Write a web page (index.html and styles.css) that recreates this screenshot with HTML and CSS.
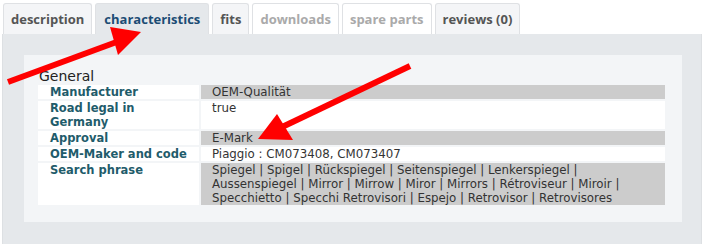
FILE: index.html
```html
<!DOCTYPE html>
<html lang="en">
<head>
  <meta charset="UTF-8" />
  <title>Product characteristics</title>
  <link rel="stylesheet" href="styles.css">
</head>
<body>
  <div class="page">
    <ul class="tabs">
      <li class="tab">description</li>
      <li class="tab active">characteristics</li>
      <li class="tab">fits</li>
      <li class="tab disabled">downloads</li>
      <li class="tab disabled">spare parts</li>
      <li class="tab">reviews (0)</li>
    </ul>

    <div class="panel">
      <div class="box">
        <div class="group-title">General</div>
        <table class="specs">
          <tr class="odd">
            <th>Manufacturer</th>
            <td>OEM-Qualität</td>
          </tr>
          <tr>
            <th>Road legal in<br>Germany</th>
            <td>true</td>
          </tr>
          <tr class="odd">
            <th>Approval</th>
            <td>E-Mark</td>
          </tr>
          <tr>
            <th>OEM-Maker and code</th>
            <td>Piaggio : CM073408, CM073407</td>
          </tr>
          <tr class="odd">
            <th>Search phrase</th>
            <td>Spiegel | Spigel | Rückspiegel | Seitenspiegel | Lenkerspiegel | Aussenspiegel | Mirror | Mirrow | Miror | Mirrors | Rétroviseur | Miroir | Specchietto | Specchi Retrovisori | Espejo | Retrovisor | Retrovisores</td>
          </tr>
        </table>
      </div>
    </div>

    <!-- annotation arrows drawn over the screenshot -->
    <svg class="arrows" width="705" height="244" viewBox="0 0 705 244">
      <line x1="8" y1="82" x2="122" y2="40" stroke="#f00" stroke-width="6" />
      <polygon points="110,27 141,32 118,55" fill="#f00" />
      <line x1="410" y1="66" x2="280" y2="128" stroke="#f00" stroke-width="6" />
      <polygon points="258,139 277,114 293,140" fill="#f00" />
    </svg>
  </div>
</body>
</html>
```

FILE: styles.css
```css
body {
  margin: 0;
  background: #fff;
  font-family: 'DejaVu Sans', Verdana, sans-serif;
}

.page {
  position: relative;
  width: 705px;
  height: 244px;
  padding: 3px 3px 0 2px;
  box-sizing: border-box;
  overflow: hidden;
}

.tabs {
  display: flex;
  gap: 3px;
  list-style: none;
  margin: 0 0 0 1px;
  padding: 0;
}

.tab {
  font-family: 'Open Sans', sans-serif;
  font-weight: bold;
  font-size: 13px;
  line-height: 18px;
  padding: 6px 7px;
  color: #555;
  background: #f4f5f7;
  border: 1px solid #dfe1e4;
  border-bottom: none;
  border-radius: 3px 3px 0 0;
}

.tab.active {
  color: #1c4c74;
  background: #e5e8eb;
  padding: 6px 8px;
}

.tab.disabled {
  color: #aaa;
  background: #fff;
}

.panel {
  background: #e5e8eb;
  border: 1px solid #dde0e3;
  border-top: none;
  padding: 21px 19px 0 21px;
  height: 230px;
  box-sizing: border-box;
}

.box {
  background: #f3f5f7;
  padding: 14px 15px 15px 12px;
}

.group-title {
  font-size: 14px;
  line-height: 14px;
  color: #222;
  padding-left: 3px;
}

.specs {
  border-collapse: separate;
  border-spacing: 2px;
  width: 631px;
  font-size: 11.8px;
  line-height: 14px;
}

.specs th {
  width: 149px;
  text-align: left;
  vertical-align: top;
  background: #fff;
  color: #1f5c6b;
  font-size: 11.5px;
  font-weight: bold;
  padding: 0 0 0 12px;
}

.specs td {
  vertical-align: top;
  background: #fff;
  color: #333;
  padding: 0 12px 0 11px;
}

.specs tr.odd td {
  background: #cccccc;
}

.arrows {
  position: absolute;
  left: 0;
  top: 0;
}
```
